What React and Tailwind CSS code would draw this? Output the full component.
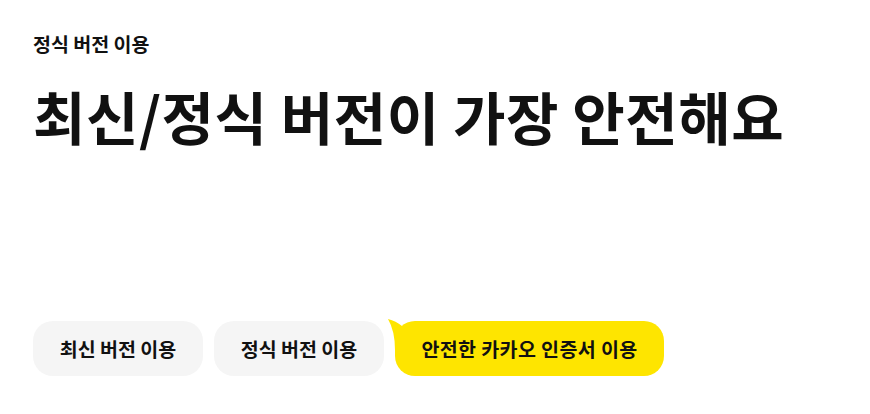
import React from "react";

const font = { fontFamily: '"Noto Sans CJK KR", "Noto Sans", sans-serif' };

// 말풍선 꼬리 (선택된 버튼 왼쪽 위로 튀어나온 뿔)
const Tail = () => (
  <svg
    className="absolute -left-[7px] -top-[2px]"
    width="22"
    height="32"
    viewBox="0 0 22 32"
    fill="none"
  >
    <path d="M0 0 Q8 2 14 7 L21 7 L21 31 L7 31 Q7 12 0 0 Z" fill="#fee500" />
  </svg>
);

const OptionButton = ({ label, active, width }) => {
  if (active) {
    return (
      <button
        type="button"
        className={`relative h-[55px] ${width} rounded-[20px] bg-[#fee500] text-[19.5px] font-bold text-[#111] tracking-[0.4px]`}
      >
        <Tail />
        <span className="relative">{label}</span>
      </button>
    );
  }
  return (
    <button
      type="button"
      className={`h-[55px] ${width} rounded-[20px] bg-[#f5f5f5] text-[19.5px] font-bold text-[#111]`}
    >
      {label}
    </button>
  );
};

const App = () => {
  return (
    <div className="min-h-screen w-[870px] h-[414px] bg-white flex flex-col px-[33px]" style={font}>
      <p className="mt-[30px] text-[19.5px] font-bold text-[#111] leading-[28px]">정식 버전 이용</p>
      <h1 className="mt-[25px] text-[57px] font-bold text-[#111] leading-[64px] tracking-[0.5px]">
        최신/정식 버전이 가장 안전해요
      </h1>

      <div className="mt-auto mb-[38px] flex items-center gap-[11px]">
        <OptionButton label="최신 버전 이용" width="w-[170px]" />
        <OptionButton label="정식 버전 이용" width="w-[170px]" />
        <OptionButton label="안전한 카카오 인증서 이용" width="w-[269px]" active />
      </div>
    </div>
  );
};

export default App;
